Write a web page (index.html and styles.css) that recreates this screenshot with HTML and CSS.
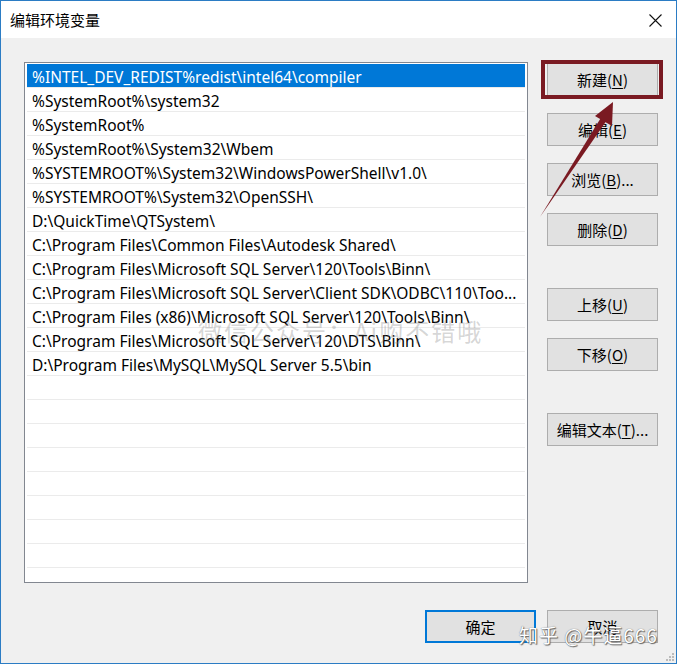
FILE: index.html
```html
<!DOCTYPE html>
<html lang="zh-CN">
<head>
<meta charset="utf-8">
<title>编辑环境变量</title>
<link rel="stylesheet" href="styles.css">
</head>
<body>
<div class="window">
  <div class="titlebar">
    <span class="title">编辑环境变量</span>
    <svg class="close" width="13" height="13" viewBox="0 0 13 13"><path d="M0.5 0.5L12.5 12.5M12.5 0.5L0.5 12.5" stroke="#111" stroke-width="1.1" fill="none"/></svg>
  </div>
  <div class="client">
    <div class="main">
      <div class="list">
        <div class="row selected">%INTEL_DEV_REDIST%redist\intel64\compiler</div>
        <div class="row">%SystemRoot%\system32</div>
        <div class="row">%SystemRoot%</div>
        <div class="row">%SystemRoot%\System32\Wbem</div>
        <div class="row">%SYSTEMROOT%\System32\WindowsPowerShell\v1.0\</div>
        <div class="row">%SYSTEMROOT%\System32\OpenSSH\</div>
        <div class="row">D:\QuickTime\QTSystem\</div>
        <div class="row">C:\Program Files\Common Files\Autodesk Shared\</div>
        <div class="row">C:\Program Files\Microsoft SQL Server\120\Tools\Binn\</div>
        <div class="row">C:\Program Files\Microsoft SQL Server\Client SDK\ODBC\110\Too...</div>
        <div class="row">C:\Program Files (x86)\Microsoft SQL Server\120\Tools\Binn\</div>
        <div class="row">C:\Program Files\Microsoft SQL Server\120\DTS\Binn\</div>
        <div class="row">D:\Program Files\MySQL\MySQL Server 5.5\bin</div>
        <div class="row"></div>
        <div class="row"></div>
        <div class="row"></div>
        <div class="row"></div>
        <div class="row"></div>
        <div class="row"></div>
        <div class="row"></div>
        <div class="row"></div>
        <div class="row"></div>
      </div>
      <div class="side">
        <div class="group">
          <button class="btn">新建(<u>N</u>)</button>
          <button class="btn">编辑(<u>E</u>)</button>
          <button class="btn">浏览(<u>B</u>)...</button>
          <button class="btn">删除(<u>D</u>)</button>
        </div>
        <div class="group">
          <button class="btn">上移(<u>U</u>)</button>
          <button class="btn">下移(<u>O</u>)</button>
        </div>
        <div class="group">
          <button class="btn">编辑文本(<u>T</u>)...</button>
        </div>
      </div>
    </div>
    <div class="footer">
      <button class="btn default">确定</button>
      <button class="btn">取消</button>
    </div>
  </div>
  <div class="highlight"></div>
  <svg class="arrow" width="677" height="664" viewBox="0 0 677 664">
    <path d="M540 217 L602 116 L607 120 Z" fill="#7a1a22"/>
    <path d="M613 102 L595 116 L612 126 Z" fill="#7a1a22"/>
  </svg>
  <div class="wm-wechat">微信公众号：Ai购不错哦</div>
  <div class="wm-zhihu">知乎 @牛逼666</div>
  <svg class="grip" width="10" height="10" viewBox="0 0 10 10">
    <rect x="7" y="1" width="2" height="2" fill="#bbb"/>
    <rect x="4" y="4" width="2" height="2" fill="#bbb"/>
    <rect x="7" y="4" width="2" height="2" fill="#bbb"/>
    <rect x="1" y="7" width="2" height="2" fill="#bbb"/>
    <rect x="4" y="7" width="2" height="2" fill="#bbb"/>
    <rect x="7" y="7" width="2" height="2" fill="#bbb"/>
  </svg>
</div>
</body>
</html>
```

FILE: styles.css
```css
* { box-sizing: border-box; }
html, body { margin: 0; padding: 0; }
body {
  width: 677px;
  height: 664px;
  overflow: hidden;
  font-family: "Noto Sans", "Noto Sans CJK SC", sans-serif;
  font-size: 15px;
  color: #000;
}
.window {
  position: relative;
  width: 677px;
  height: 664px;
  border: 1px solid #2b7cc4;
  background: #f0f0f0;
  display: flex;
  flex-direction: column;
}
.titlebar {
  height: 37px;
  background: #fff;
  display: flex;
  align-items: center;
  justify-content: space-between;
  padding: 0 14px 0 9px;
}
.title {
  font-family: "Noto Sans CJK SC", sans-serif;
  font-size: 15px;
  color: #000;
}
.close { display: block; margin-top: 1px; }
.client {
  flex: 1;
  padding: 24px 18px 20px 23px;
  display: flex;
  flex-direction: column;
}
.main {
  display: flex;
  gap: 19px;
  height: 521px;
}
.list {
  width: 505px;
  height: 521px;
  background: #fff;
  border: 1px solid #828790;
  padding: 1px 2px;
  overflow: hidden;
}
.row {
  height: 24px;
  line-height: 22px;
  padding: 2px 0 0 5px;
  border-bottom: 1px solid #ebebeb;
  white-space: nowrap;
  overflow: hidden;
  font-family: "Noto Sans", "Noto Sans CJK SC", sans-serif;
  font-size: 15.5px;
}
.row.selected {
  background: #0078d7;
  color: #fff;
}
.side {
  display: flex;
  flex-direction: column;
  gap: 42px;
  padding-top: 1px;
}
.group {
  display: flex;
  flex-direction: column;
  gap: 17px;
}
.btn {
  width: 111px;
  height: 33px;
  background: #e1e1e1;
  border: 1px solid #adadad;
  font-family: "Noto Sans CJK SC", sans-serif;
  font-size: 15px;
  color: #000;
  padding: 0;
  margin: 0;
}
.btn u { text-decoration-thickness: 1px; text-underline-offset: 2px; }
.footer {
  margin-top: auto;
  display: flex;
  justify-content: flex-end;
  gap: 11px;
}
.btn.default {
  border: 2px solid #0078d7;
}
.highlight {
  position: absolute;
  left: 540px;
  top: 59px;
  width: 122px;
  height: 39px;
  border: 4px solid #7a1a22;
}
.arrow {
  position: absolute;
  left: -1px;
  top: -1px;
}
.wm-wechat {
  position: absolute;
  left: 197px;
  top: 312px;
  font-family: "Noto Sans CJK SC", sans-serif;
  font-size: 24px;
  color: rgba(130, 130, 130, 0.32);
  letter-spacing: 2px;
}
.wm-zhihu {
  position: absolute;
  left: 518px;
  top: 620px;
  font-family: "Noto Sans CJK SC", sans-serif;
  font-size: 19px;
  color: #fff;
  letter-spacing: 1px;
  text-shadow: 0 0 1px #555, 1px 1px 1px #666;
}
.grip {
  position: absolute;
  right: 1px;
  bottom: 1px;
}
```
